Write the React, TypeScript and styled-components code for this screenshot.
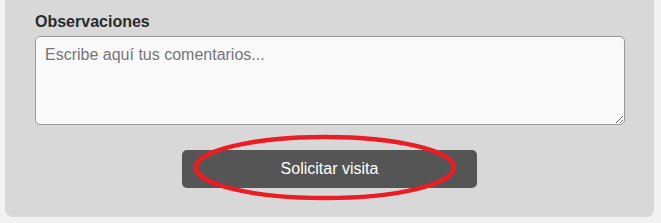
import React from 'react';
import styled, { createGlobalStyle } from 'styled-components';

const GlobalStyle = createGlobalStyle`
  html, body {
    margin: 0;
    padding: 0;
    background: #f2f2f2;
    font-family: "Liberation Sans", Arial, sans-serif;
    overflow: hidden;
  }
`;

const Card = styled.div`
  box-sizing: border-box;
  width: 649px;
  margin: -12px 0 0 5px;
  padding: 25px 30px 29px;
  background: #d8d8d8;
  border-radius: 8px;
  display: flex;
  flex-direction: column;
`;

const Label = styled.label`
  font-size: 16px;
  line-height: 18px;
  font-weight: bold;
  color: #2b2b2b;
  margin-bottom: 5px;
`;

const Comments = styled.textarea`
  box-sizing: border-box;
  width: 590px;
  height: 89px;
  padding: 9px 9px;
  border: 1px solid #9a9a9a;
  border-radius: 5px;
  background: #f9f9f9;
  font-family: "Liberation Sans", Arial, sans-serif;
  font-size: 16px;
  color: #333;
  outline: none;

  &::placeholder {
    color: #767676;
  }
`;

const Actions = styled.div`
  position: relative;
  display: flex;
  justify-content: center;
  margin-top: 25px;
`;

const SubmitButton = styled.button`
  width: 295px;
  height: 38px;
  border: none;
  border-radius: 5px;
  background: #555555;
  color: #ffffff;
  font-family: "Liberation Sans", Arial, sans-serif;
  font-size: 16px;
  cursor: pointer;
`;

const Highlight = styled.svg`
  position: absolute;
  left: 158px;
  top: -16px;
  pointer-events: none;
`;

const App = () => {
  return (
    <>
      <GlobalStyle />
      <Card>
        <Label htmlFor="obs">Observaciones</Label>
        <Comments id="obs" placeholder="Escribe aquí tus comentarios..." />
        <Actions>
          <SubmitButton type="button">Solicitar visita</SubmitButton>
          <Highlight width="270" height="70" viewBox="0 0 270 70">
            <ellipse
              cx="132"
              cy="33.5"
              rx="129"
              ry="30.5"
              fill="none"
              stroke="#ec1c24"
              strokeWidth="4.5"
            />
          </Highlight>
        </Actions>
      </Card>
    </>
  );
};

export default App;
